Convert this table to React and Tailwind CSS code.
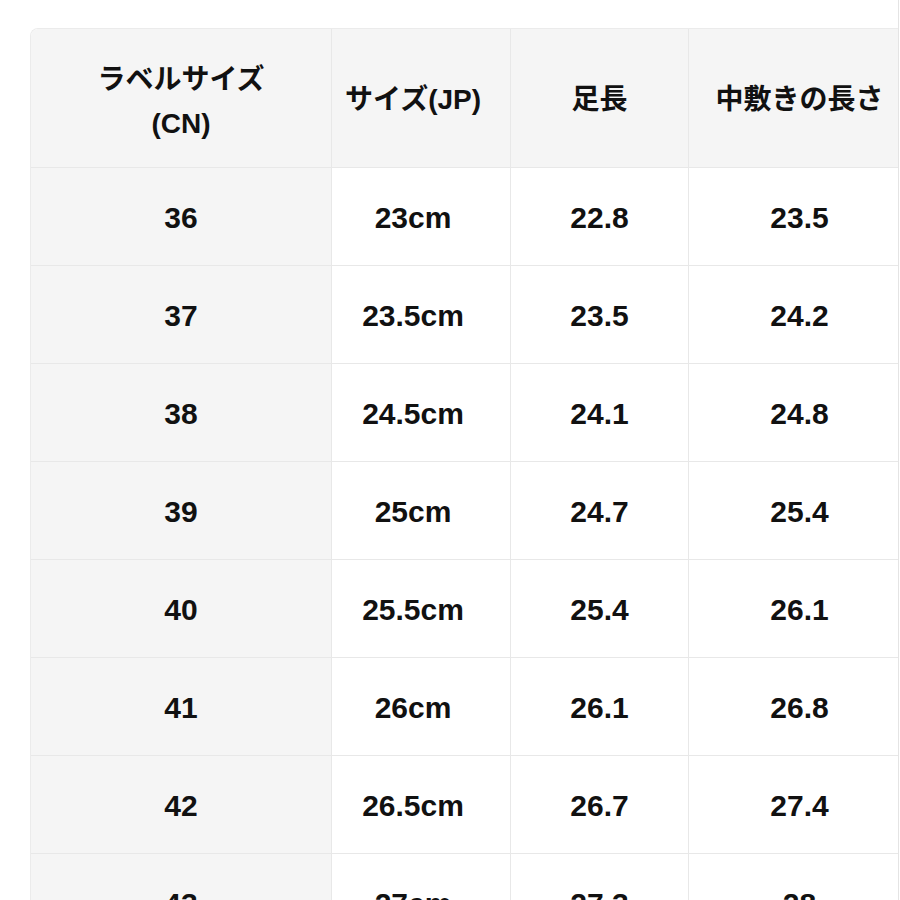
const headers = [
  <>ラベルサイズ<br />(CN)</>,
  "サイズ(JP)",
  "足長",
  "中敷きの長さ",
];

const rows = [
  ["36", "23cm", "22.8", "23.5"],
  ["37", "23.5cm", "23.5", "24.2"],
  ["38", "24.5cm", "24.1", "24.8"],
  ["39", "25cm", "24.7", "25.4"],
  ["40", "25.5cm", "25.4", "26.1"],
  ["41", "26cm", "26.1", "26.8"],
  ["42", "26.5cm", "26.7", "27.4"],
  ["43", "27cm", "27.3", "28"],
];

export default function App() {
  return (
    <div
      className="w-[899px] h-[900px] overflow-hidden bg-white border-r border-[#e4e4e4] pl-[30px] pt-[28px] text-[#111]"
      style={{ fontFamily: '"Liberation Sans", "Noto Sans CJK JP", Arial, sans-serif' }}
    >
      <div className="w-[880px] rounded-tl-[8px] border-t border-l border-[#ebebeb] overflow-hidden">
        <div className="grid grid-cols-[301px_179px_178px_222px] bg-[#f5f5f5]">
          {headers.map((h, i) => (
            <div
              key={i}
              className={
                "h-[139px] flex items-center justify-center text-center text-[28px] leading-[44px] font-semibold border-b border-r border-[#e8e8e8] " +
                (i === 1 ? "pr-[16px]" : "")
              }
            >
              <span className={i === 0 ? "mt-[8px]" : "mt-[4px]"}>{h}</span>
            </div>
          ))}
        </div>
        {rows.map((r, ri) => (
          <div key={ri} className="grid grid-cols-[301px_179px_178px_222px]">
            {r.map((c, ci) => (
              <div
                key={ci}
                className={
                  "h-[98px] flex items-center justify-center text-[30px] font-semibold border-b border-r border-[#e8e8e8] " +
                  (ci === 0 ? "bg-[#f5f5f5] " : "bg-white ") +
                  (ci === 1 ? "pr-[16px]" : "")
                }
              >
                <span className="mt-[2px]">{c}</span>
              </div>
            ))}
          </div>
        ))}
      </div>
    </div>
  );
}
